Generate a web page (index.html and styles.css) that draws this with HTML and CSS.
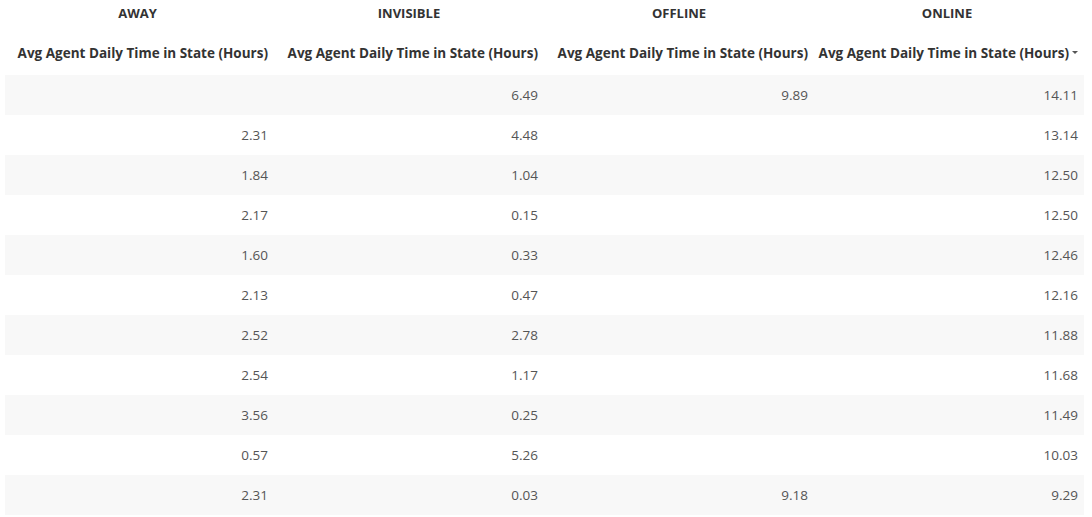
FILE: index.html
```html
<!DOCTYPE html>
<html>
<head>
<meta charset="utf-8">
<link rel="stylesheet" href="styles.css">
</head>
<body>
<table class="grid">
  <colgroup>
    <col class="c1"><col class="c2"><col class="c3"><col class="c4">
  </colgroup>
  <thead>
    <tr class="group">
      <th>AWAY</th><th>INVISIBLE</th><th>OFFLINE</th><th>ONLINE</th>
    </tr>
    <tr class="measure">
      <th>Avg Agent Daily Time in State (Hours)</th>
      <th>Avg Agent Daily Time in State (Hours)</th>
      <th>Avg Agent Daily Time in State (Hours)</th>
      <th class="sorted">Avg Agent Daily Time in State (Hours)<span class="caret"></span></th>
    </tr>
  </thead>
  <tbody>
    <tr><td></td><td>6.49</td><td>9.89</td><td>14.11</td></tr>
    <tr><td>2.31</td><td>4.48</td><td></td><td>13.14</td></tr>
    <tr><td>1.84</td><td>1.04</td><td></td><td>12.50</td></tr>
    <tr><td>2.17</td><td>0.15</td><td></td><td>12.50</td></tr>
    <tr><td>1.60</td><td>0.33</td><td></td><td>12.46</td></tr>
    <tr><td>2.13</td><td>0.47</td><td></td><td>12.16</td></tr>
    <tr><td>2.52</td><td>2.78</td><td></td><td>11.88</td></tr>
    <tr><td>2.54</td><td>1.17</td><td></td><td>11.68</td></tr>
    <tr><td>3.56</td><td>0.25</td><td></td><td>11.49</td></tr>
    <tr><td>0.57</td><td>5.26</td><td></td><td>10.03</td></tr>
    <tr><td>2.31</td><td>0.03</td><td>9.18</td><td>9.29</td></tr>
  </tbody>
</table>
</body>
</html>
```

FILE: styles.css
```css
html, body {
  margin: 0;
  padding: 0;
  background: #ffffff;
}
body {
  font-family: "Open Sans", "Noto Sans", sans-serif;
  color: #333;
}
.grid {
  margin-left: 5px;
  border-collapse: collapse;
  table-layout: fixed;
  width: 1079px;
}
.c1 { width: 273px; }
.c2 { width: 270px; }
.c3 { width: 270px; }
.c4 { width: 266px; }
.group th {
  height: 25px;
  padding: 0 10px 6px 2px;
  font-size: 13px;
  font-weight: 700;
  text-align: center;
  vertical-align: middle;
  color: #333;
}
.measure th {
  height: 44px;
  padding: 0 10px 0 0;
  font-size: 13.5px;
  font-weight: 700;
  text-align: right;
  vertical-align: middle;
  white-space: nowrap;
  color: #333;
}
.measure th.sorted {
  padding-right: 6px;
}
.caret {
  display: inline-block;
  width: 0;
  height: 0;
  margin-left: 3px;
  vertical-align: 4px;
  border-left: 3px solid transparent;
  border-right: 3px solid transparent;
  border-top: 3px solid #555;
}
tbody td {
  height: 40px;
  padding: 0 10px 0 0;
  font-size: 13.5px;
  text-align: right;
  vertical-align: middle;
  color: #555;
}
tbody td:last-child {
  padding-right: 6px;
}
tbody tr:nth-child(odd) {
  background: #f8f8f8;
}
```
